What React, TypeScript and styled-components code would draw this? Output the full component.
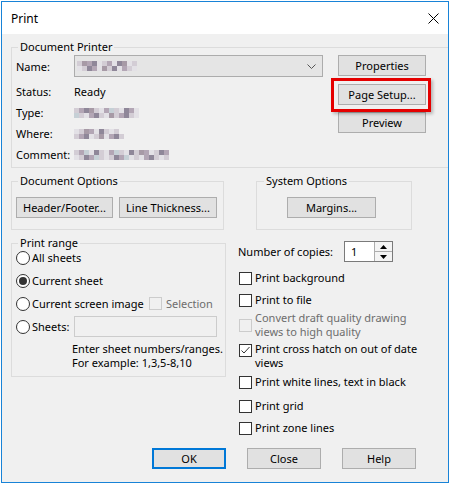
import styled, { createGlobalStyle } from "styled-components";

const GlobalStyle = createGlobalStyle`
  html, body {
    margin: 0;
    padding: 0;
    background: #ffffff;
  }
  body {
    font-family: "Noto Sans", "DejaVu Sans", sans-serif;
    font-size: 11px;
    color: #000;
  }
`

const Window = styled.div`
    box-sizing: border-box;
    width: 448px;
    height: 482px;
    margin: 1px 0 0 1px;
    border: 1px solid #1883d7;
    background: #f0f0f0;
    display: flex;
    flex-direction: column;
    overflow: hidden;
`

const TitleBar = styled.div`
    height: 32px;
    flex-shrink: 0;
    background: #fff;
    display: flex;
    align-items: center;
    justify-content: space-between;
    padding: 0 9px 0 9px;
`

const Title = styled.span`
    font-size: 12px;
`

const Body = styled.div`
    flex: 1;
    display: flex;
    flex-direction: column;
    align-items: flex-start;
    padding: 0 32px 13px 9px;
`

const Group = styled.div<{ $w: number; $h: number; $mt?: number; $ml?: number }>`
    position: relative;
    box-sizing: border-box;
    flex-shrink: 0;
    width: ${p => p.$w}px;
    height: ${p => p.$h}px;
    margin-top: ${p => p.$mt ?? 0}px;
    margin-left: ${p => p.$ml ?? 0}px;
    border: 1px solid #dcdcdc;
`

const Legend = styled.span<{ $left?: number }>`
    position: absolute;
    top: -8px;
    left: ${p => p.$left ?? 6}px;
    padding: 0 2px;
    line-height: 14px;
    background: #f0f0f0;
    white-space: nowrap;
`

const PrinterBody = styled.div`
    display: flex;
    padding: 7px 0 0 4px;
`

const InfoCol = styled.div`
    display: flex;
    flex-direction: column;
`

const InfoRow = styled.div<{ $h?: number; $mt?: number }>`
    display: flex;
    align-items: center;
    height: ${p => p.$h ?? 21}px;
    margin-top: ${p => p.$mt ?? 0}px;
`

const InfoLabel = styled.span`
    width: 58px;
    flex-shrink: 0;
`

const Combo = styled.div`
    box-sizing: border-box;
    width: 249px;
    height: 22px;
    border: 1px solid #acacac;
    background: #e5e5e5;
    display: flex;
    align-items: center;
    justify-content: space-between;
    padding: 0 6px 0 2px;
`

const SideButtons = styled.div`
    display: flex;
    flex-direction: column;
    margin-left: 15px;
`

const Button = styled.button<{ $w: number; $default?: boolean; $mt?: number }>`
    box-sizing: border-box;
    width: ${p => p.$w}px;
    height: 21px;
    margin: ${p => p.$mt ?? 0}px 0 0 0;
    padding: 0;
    font: inherit;
    color: #000;
    background: #e1e1e1;
    border: ${p => (p.$default ? "2px solid #0078d7" : "1px solid #adadad")};
    flex-shrink: 0;
`

const HighlightWrap = styled.div`
    position: relative;
    margin-top: 8px;
    display: flex;
`

const Highlight = styled.span`
    position: absolute;
    left: -7px;
    right: -5px;
    top: -6px;
    bottom: -7px;
    border: 3px solid #e50000;
    box-shadow: 2px 2px 3px rgba(0, 0, 0, 0.25);
    pointer-events: none;
`

const Row = styled.div<{ $mt?: number; $gap?: number }>`
    display: flex;
    align-items: flex-start;
    margin-top: ${p => p.$mt ?? 0}px;
    gap: ${p => p.$gap ?? 0}px;
`

const GroupContent = styled.div<{ $pl: number }>`
    display: flex;
    gap: 6px;
    padding: 15px 0 0 ${p => p.$pl}px;
`

const RangeBody = styled.div`
    display: flex;
    flex-direction: column;
    padding: 2px 0 0 4px;
`

const RadioRow = styled.label`
    display: flex;
    align-items: center;
    height: 23px;
`

const RadioCircle = styled.span<{ $on?: boolean }>`
    box-sizing: border-box;
    width: 14px;
    height: 14px;
    border: 1px solid #333;
    border-radius: 50%;
    background: #fff;
    display: flex;
    align-items: center;
    justify-content: center;
    flex-shrink: 0;
    margin-right: 2px;

    &::after {
        content: "";
        display: ${p => (p.$on ? "block" : "none")};
        width: 8px;
        height: 8px;
        border-radius: 50%;
        background: #333;
    }
`

const RadioText = styled.span<{ $w?: number; $muted?: boolean; $ml?: number }>`
    white-space: nowrap;
    color: ${p => (p.$muted ? "#6d6d6d" : "#000")};
    margin-left: ${p => p.$ml ?? 0}px;
    ${p => (p.$w ? `width: ${p.$w}px; flex-shrink: 0;` : "")}
`

const Box = styled.span<{ $disabled?: boolean; $top?: number }>`
    box-sizing: border-box;
    width: 13px;
    height: 13px;
    flex-shrink: 0;
    border: 1px solid ${p => (p.$disabled ? "#cccccc" : "#333")};
    background: ${p => (p.$disabled ? "transparent" : "#fff")};
    display: flex;
    align-items: center;
    justify-content: center;
    ${p => (p.$top !== undefined ? `align-self: flex-start; margin-top: ${p.$top}px;` : "")}
`

const SheetsInput = styled.div`
    box-sizing: border-box;
    width: 143px;
    height: 21px;
    border: 1px solid #cccccc;
    background: #f0f0f0;
    margin-left: 2px;
`

const Hint = styled.div`
    margin: 4px 0 0 56px;
    line-height: 14px;
    white-space: nowrap;
`

const RightCol = styled.div`
    display: flex;
    flex-direction: column;
    margin-left: 12px;
`

const CopiesRow = styled.div`
    display: flex;
    align-items: center;
    height: 21px;
`

const CopiesLabel = styled.span`
    width: 106px;
    flex-shrink: 0;
`

const Spinner = styled.div`
    box-sizing: border-box;
    width: 49px;
    height: 21px;
    border: 1px solid #7a7a7a;
    background: #fff;
    display: flex;
`

const SpinValue = styled.span`
    flex: 1;
    padding-left: 6px;
    line-height: 19px;
`

const SpinButtons = styled.div`
    width: 17px;
    display: flex;
    flex-direction: column;
    border-left: 1px solid #adadad;
`

const SpinButton = styled.span<{ $first?: boolean }>`
    flex: 1;
    display: flex;
    align-items: center;
    justify-content: center;
    background: #f4f4f4;
    border-top: ${p => (p.$first ? "none" : "1px solid #adadad")};
`

const CheckRow = styled.label<{ $mt?: number; $disabled?: boolean }>`
    display: flex;
    align-items: center;
    gap: 3px;
    min-height: 22px;
    margin-top: ${p => p.$mt ?? 0}px;
    margin-left: 1px;
    line-height: 14px;
    white-space: nowrap;
    color: ${p => (p.$disabled ? "#6d6d6d" : "#000")};
`

const ButtonRow = styled.div`
    margin-top: auto;
    align-self: flex-end;
    display: flex;
    gap: 21px;
`

const MosaicGrid = styled.span<{ $cols: number }>`
    display: grid;
    grid-template-columns: repeat(${p => p.$cols}, 5px);
    grid-auto-rows: 5px;
`

const palette: Record<string, string> = {
    a: "#b3a6b5",
    b: "#d3cdd5",
    c: "#8f8799",
    d: "#e3e1e6",
    e: "#c6d0d6",
    f: "#a79aa6",
    ".": "transparent",
}

function Mosaic({ rows }: { rows: string[] }) {
    return (
        <MosaicGrid $cols={rows[0].length} aria-hidden>
            {rows.flatMap((r, i) =>
                r.split("").map((ch, j) => (
                    <span key={`${i}-${j}`} style={{ background: palette[ch] }} />
                ))
            )}
        </MosaicGrid>
    )
}

const Check = () => (
    <svg width="11" height="11" viewBox="0 0 11 11">
        <path d="M1.5 5.5 L4 8 L9.5 2" fill="none" stroke="#333" strokeWidth="1" />
    </svg>
)

export default function App() {
    return (
        <>
            <GlobalStyle />
            <Window>
                <TitleBar>
                    <Title>Print</Title>
                    <svg width="11" height="11" viewBox="0 0 11 11">
                        <path d="M0.5 0.5 L10.5 10.5 M10.5 0.5 L0.5 10.5" stroke="#000" strokeWidth="1" />
                    </svg>
                </TitleBar>
                <Body>
                    <Group $w={456} $h={121} $mt={13}>
                        <Legend>Document Printer</Legend>
                        <PrinterBody>
                            <InfoCol>
                                <InfoRow $h={22}>
                                    <InfoLabel>Name:</InfoLabel>
                                    <Combo>
                                        <Mosaic rows={["bfacdbadcfdb", "dbcadfbcdabd"]} />
                                        <svg width="9" height="5" viewBox="0 0 9 5">
                                            <path d="M0.5 0.5 L4.5 4.5 L8.5 0.5" fill="none" stroke="#555" strokeWidth="1" />
                                        </svg>
                                    </Combo>
                                </InfoRow>
                                <InfoRow $mt={4}>
                                    <InfoLabel>Status:</InfoLabel>
                                    <span>Ready</span>
                                </InfoRow>
                                <InfoRow>
                                    <InfoLabel>Type:</InfoLabel>
                                    <Mosaic rows={["bacfbdaebdcad", "ebdacbdfbacbd"]} />
                                </InfoRow>
                                <InfoRow>
                                    <InfoLabel>Where:</InfoLabel>
                                    <Mosaic rows={["dbfadcbdb.", "bacdbfdacb"]} />
                                </InfoRow>
                                <InfoRow>
                                    <InfoLabel>Comment:</InfoLabel>
                                    <Mosaic rows={["baedcbdaebdcbfadbca", "dbcaebdbcaedbdacbdb"]} />
                                </InfoRow>
                            </InfoCol>
                            <SideButtons>
                                <Button $w={88}>Properties</Button>
                                <HighlightWrap>
                                    <Button $w={88}>Page Setup...</Button>
                                    <Highlight />
                                </HighlightWrap>
                                <Button $w={88} $mt={7}>Preview</Button>
                            </SideButtons>
                        </PrinterBody>
                    </Group>

                    <Row $mt={13}>
                        <Group $w={213} $h={49}>
                            <Legend>Document Options</Legend>
                            <GroupContent $pl={4}>
                                <Button $w={97}>Header/Footer...</Button>
                                <Button $w={98}>Line Thickness...</Button>
                            </GroupContent>
                        </Group>
                        <Group $w={156} $h={49} $ml={32}>
                            <Legend $left={7}>System Options</Legend>
                            <GroupContent $pl={30}>
                                <Button $w={89}>Margins...</Button>
                            </GroupContent>
                        </Group>
                    </Row>

                    <Row $mt={11}>
                        <Group $w={215} $h={134} $mt={2}>
                            <Legend>Print range</Legend>
                            <RangeBody>
                                <RadioRow>
                                    <RadioCircle />
                                    <RadioText>All sheets</RadioText>
                                </RadioRow>
                                <RadioRow>
                                    <RadioCircle $on />
                                    <RadioText>Current sheet</RadioText>
                                </RadioRow>
                                <RadioRow>
                                    <RadioCircle />
                                    <RadioText $w={117}>Current screen image</RadioText>
                                    <Box $disabled />
                                    <RadioText $muted $ml={4}>Selection</RadioText>
                                </RadioRow>
                                <RadioRow>
                                    <RadioCircle />
                                    <RadioText $w={40}>Sheets:</RadioText>
                                    <SheetsInput />
                                </RadioRow>
                                <Hint>
                                    Enter sheet numbers/ranges.
                                    <br />
                                    For example: 1,3,5-8,10
                                </Hint>
                            </RangeBody>
                        </Group>

                        <RightCol>
                            <CopiesRow>
                                <CopiesLabel>Number of copies:</CopiesLabel>
                                <Spinner>
                                    <SpinValue>1</SpinValue>
                                    <SpinButtons>
                                        <SpinButton $first>
                                            <svg width="7" height="4" viewBox="0 0 7 4"><path d="M0 4 L3.5 0 L7 4 Z" fill="#000" /></svg>
                                        </SpinButton>
                                        <SpinButton>
                                            <svg width="7" height="4" viewBox="0 0 7 4"><path d="M0 0 L3.5 4 L7 0 Z" fill="#000" /></svg>
                                        </SpinButton>
                                    </SpinButtons>
                                </Spinner>
                            </CopiesRow>
                            <CheckRow $mt={5}>
                                <Box />
                                <span>Print background</span>
                            </CheckRow>
                            <CheckRow>
                                <Box />
                                <span>Print to file</span>
                            </CheckRow>
                            <CheckRow $disabled>
                                <Box $disabled />
                                <span>Convert draft quality drawing<br />views to high quality</span>
                            </CheckRow>
                            <CheckRow $mt={3}>
                                <Box $top={2}><Check /></Box>
                                <span>Print cross hatch on out of date<br />views</span>
                            </CheckRow>
                            <CheckRow $mt={1}>
                                <Box />
                                <span>Print white lines, text in black</span>
                            </CheckRow>
                            <CheckRow $mt={2}>
                                <Box />
                                <span>Print grid</span>
                            </CheckRow>
                            <CheckRow>
                                <Box />
                                <span>Print zone lines</span>
                            </CheckRow>
                        </RightCol>
                    </Row>

                    <ButtonRow>
                        <Button $w={74} $default>OK</Button>
                        <Button $w={74}>Close</Button>
                        <Button $w={74}>Help</Button>
                    </ButtonRow>
                </Body>
            </Window>
        </>
    )
}
